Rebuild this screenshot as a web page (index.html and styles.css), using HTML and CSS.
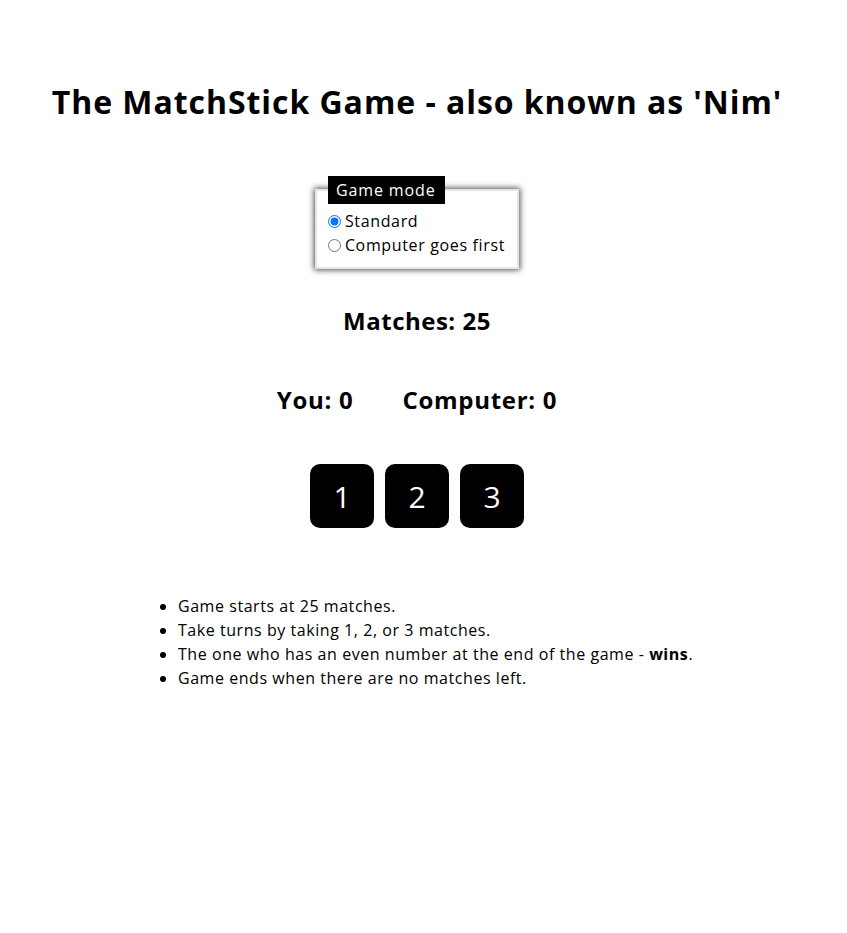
FILE: index.html
```html
<!DOCTYPE html>
<html lang="en">
<head>
<meta charset="utf-8">
<title>The MatchStick Game</title>
<link rel="stylesheet" href="styles.css">
</head>
<body>
<main class="page">
  <h1 class="title">The MatchStick Game - also known as 'Nim'</h1>
  <fieldset class="mode">
    <legend class="mode-legend">Game mode</legend>
    <label class="mode-option"><input type="radio" name="mode" checked> Standard</label>
    <label class="mode-option"><input type="radio" name="mode"> Computer goes first</label>
  </fieldset>
  <h2 class="matches">Matches: 25</h2>
  <div class="scores">
    <h2 class="score">You: 0</h2>
    <h2 class="score">Computer: 0</h2>
  </div>
  <div class="buttons">
    <button class="take">1</button>
    <button class="take">2</button>
    <button class="take">3</button>
  </div>
  <ul class="rules">
    <li>Game starts at 25 matches.</li>
    <li>Take turns by taking 1, 2, or 3 matches.</li>
    <li>The one who has an even number at the end of the game - <b>wins</b>.</li>
    <li>Game ends when there are no matches left.</li>
  </ul>
</main>
</body>
</html>
```

FILE: styles.css
```css
html, body {
  margin: 0;
  padding: 0;
  background: #fff;
}
body {
  font-family: "Open Sans", "DejaVu Sans", sans-serif;
  color: #000;
}
.page {
  width: 834px;
  display: flex;
  flex-direction: column;
  align-items: center;
  padding-top: 82px;
}
.title {
  margin: 0;
  font-size: 32px;
  font-weight: 700;
  line-height: 40px;
  letter-spacing: 0.95px;
}
.mode {
  margin: 54px 0 0 0;
  padding: 5px 12px 10px 10px;
  border: 2px solid #e4e4e4;
  box-shadow: 0 0 6px 1px rgba(0,0,0,0.7);
  display: flex;
  flex-direction: column;
  min-width: 0;
}
.mode-legend {
  background: #000;
  color: #fff;
  font-size: 16px;
  line-height: 28px;
  padding: 0 9px 0 8px;
  margin-left: 1px;
  letter-spacing: 0.9px;
}
.mode-option {
  font-size: 16px;
  line-height: 24px;
  display: flex;
  align-items: center;
  gap: 4px;
  letter-spacing: 0.65px;
}
.mode-option input {
  margin: 0 0 0 1px;
  width: 13px;
  height: 13px;
}
.matches {
  margin: 37px 0 0 0;
  font-size: 24px;
  line-height: 30px;
  font-weight: 700;
  letter-spacing: 0.5px;
}
.scores {
  display: flex;
  gap: 49px;
  margin-top: 49px;
}
.score {
  margin: 0;
  font-size: 24px;
  line-height: 30px;
  font-weight: 700;
  letter-spacing: 0.7px;
}
.buttons {
  display: flex;
  gap: 11px;
  margin-top: 49px;
}
.take {
  width: 64px;
  height: 64px;
  border: none;
  border-radius: 10px;
  background: #000;
  color: #fff;
  font-family: inherit;
  font-size: 30px;
  font-weight: 400;
  padding: 0;
  cursor: pointer;
}
.rules {
  align-self: flex-start;
  margin: 66px 0 0 138px;
  padding-left: 40px;
  font-size: 16px;
  line-height: 24px;
  font-weight: 400;
  letter-spacing: 0.55px;
}
```
